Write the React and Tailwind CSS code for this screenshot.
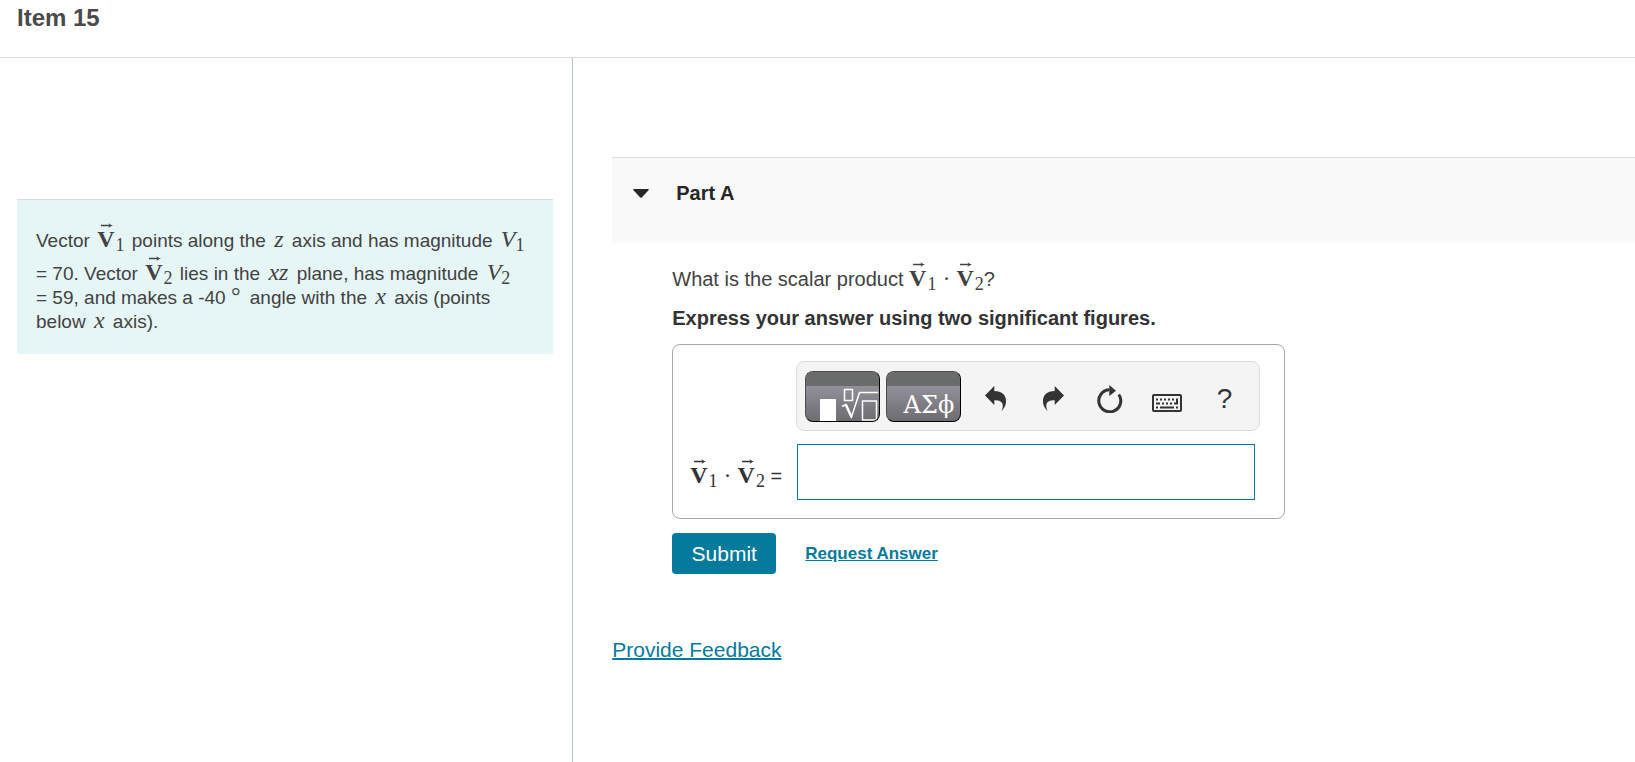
import { useState } from 'react';

// Bold vector symbol with an arrow on top and a subscript
function Vec({ sub }) {
  return (
    <span className="inline-block pt-[7px] font-['Liberation_Serif',serif] leading-6 whitespace-nowrap">
      <span className="relative inline-block text-2xl leading-6 font-bold">
        V
        <svg
          className="absolute -top-1 left-1 h-[5px] w-3"
          viewBox="0 0 12 5"
          aria-hidden="true"
        >
          <path d="M0 2.5H10" stroke="currentColor" strokeWidth="1.5" />
          <path d="M7.500 0Q9 2 12 2.5Q9 3 7.500 5L8.500 2.5Z" fill="currentColor" />
        </svg>
      </span>
      <span className="relative top-1 ml-px text-lg leading-4">{sub}</span>
    </span>
  );
}

function Var({ children, sub }) {
  return (
    <span className="mx-[3px] font-['Liberation_Serif',serif] text-2xl leading-4 whitespace-nowrap">
      <i>{children}</i>
      {sub && <span className="relative top-1 text-lg leading-4">{sub}</span>}
    </span>
  );
}

function DotProduct() {
  return (
    <span className="whitespace-nowrap">
      <Vec sub="1" />
      <span className="mx-[6px] font-['Liberation_Serif',serif] text-2xl leading-6">·</span>
      <Vec sub="2" />
    </span>
  );
}

const icons = [
  {
    label: 'Undo',
    box: '0 0 22 26',
    size: 'w-[22px] h-[26px]',
    art: <path d="M0 9.5L9.3 0V5C17 5 21.5 9 21 16.500Q20.500 21 16.500 25Q19 19.500 16.800 16.500Q14.500 13.800 9.300 14.300V19Z" fill="currentColor" />,
  },
  {
    label: 'Redo',
    box: '0 0 22 26',
    size: 'w-[22px] h-[26px]',
    art: <path d="M22 9.5L12.700 0V5C5 5 .5 9 1 16.500Q1.500 21 5.500 25Q3 19.500 5.200 16.500Q7.500 13.800 12.700 14.300V19Z" fill="currentColor" />,
  },
  {
    label: 'Reset',
    box: '0 0 26 28',
    size: 'w-[26px] h-7',
    art: (
      <>
        <path d="M12.500 4.800A11 11 0 1 0 21.800 9.500" fill="none" stroke="currentColor" strokeWidth="3" />
        <path d="M12.300 0L19 5.700L12.300 11Z" fill="currentColor" />
      </>
    ),
  },
  {
    label: 'Keyboard shortcuts',
    box: '0 0 30 18',
    size: 'mt-2 w-[30px] h-[18px]',
    art: (
      <>
        <rect x="1" y="1" width="28" height="16" rx="1" fill="none" stroke="currentColor" strokeWidth="2" />
        <path d="M4 5.500H23" stroke="currentColor" strokeWidth="2" strokeDasharray="2 2" />
        <path d="M4 9.500H8M10 9.500H12M14 9.500H16M18 9.500H20M22 9.500H26M25 4.500V10" stroke="currentColor" strokeWidth="2" />
        <path d="M4 13.500H6M8 13.500H22M24 13.500H26" stroke="currentColor" strokeWidth="2" />
      </>
    ),
  },
];

const paletteButton =
  'relative h-[51px] w-[75px] shrink-0 overflow-hidden rounded-lg border border-black border-t-[#4c4c4c] border-l-[#4c4c4c] bg-linear-to-b from-[#a29fac] to-[#6d6c70] text-white';

export default function App() {
  const [answer, setAnswer] = useState('');
  const [open, setOpen] = useState(true);

  return (
    <div className="flex min-h-screen flex-col bg-white font-['Liberation_Sans',Arial,sans-serif] text-[#333]">
      {/* Header */}
      <header className="h-[58px] border-b border-[#dcdcdc] px-[17px] pt-1">
        <h1 className="text-2xl leading-7 font-bold text-[#4a4a4a]">Item 15</h1>
      </header>

      <div className="flex grow">
        {/* Problem statement */}
        <aside className="w-[35%] shrink-0 pt-[141px] pr-[19px] pl-[17px]">
          <p className="border-t border-[#d4dedd] bg-[#e6f6f7] py-5 pr-6 pl-[19px] text-[19px] leading-6 text-[#424242]">
            Vector{' '}
            <span className="mx-[2px]">
              <Vec sub="1" />
            </span>{' '}
            points along the <Var>z</Var> axis and has magnitude <Var sub="1">V</Var> = 70. Vector{' '}
            <span className="mx-[2px]">
              <Vec sub="2" />
            </span>{' '}
            lies in the <Var>xz</Var> plane, has magnitude <Var sub="2">V</Var> = 59, and makes a
            -40{' '}
            <span className="mr-1 font-['Liberation_Serif',serif] text-2xl leading-4">°</span> angle
            with the <Var>x</Var> axis (points below <Var>x</Var> axis).
          </p>
        </aside>

        {/* Question */}
        <main className="min-w-0 grow border-l border-[#b4cbdb] pt-[99px] pl-[39px]">
          <section>
            <div className="h-[86px] border-t border-[#dcdcdc] bg-[#f9f9f9] pt-[23px] pl-[21px]">
              <h2>
                <button
                  type="button"
                  aria-expanded={open}
                  onClick={() => setOpen(!open)}
                  className="flex items-center gap-[27px] text-xl leading-6 font-bold text-[#262626]"
                >
                  <svg className="h-[9px] w-4" viewBox="0 0 16 9" aria-hidden="true">
                    <path d="M1 0H15Q16.500 .3 15.300 1.500L9 8.300Q8 9.300 7 8.300L.7 1.500Q-.5 .3 1 0Z" fill="currentColor" />
                  </svg>
                  Part A
                </button>
              </h2>
            </div>

            {open && (
              <div className="pt-4 pl-[60px]">
                <p className="text-xl leading-6 text-[#424242]">
                  What is the scalar product <DotProduct />?
                </p>
                <p className="mt-[15px] text-xl leading-6 font-bold">
                  Express your answer using two significant figures.
                </p>

                <div className="mt-[14px] grid max-w-[613px] grid-cols-[106px_1fr] gap-y-[13px] rounded-lg border border-[#a8a8a8] pt-4 pr-6 pb-[18px] pl-[17px]">
                  {/* Equation toolbar */}
                  <div className="col-start-2 flex h-[70px] items-center gap-[6px] rounded-lg border border-[#dcdcdc] bg-[#f4f4f4] pr-[6px] pl-2 text-[#333]">
                    <button type="button" aria-label="Templates" className={paletteButton}>
                      <span className="absolute inset-x-0 top-0 h-[14px] bg-[#6a6b6b]" />
                      <svg className="absolute inset-0 h-[49px] w-[73px]" viewBox="1 1 73 49" aria-hidden="true">
                        <rect x="15" y="28" width="16" height="22" fill="white" />
                        <rect x="39.500" y="18.500" width="8" height="11" fill="none" stroke="white" strokeWidth="1.500" />
                        <path d="M37 35.500L41 33.500L46.500 46L54.500 21.500H73" fill="none" stroke="white" strokeWidth="1.500" />
                        <path d="M41 34L46.500 46" stroke="white" strokeWidth="2.500" />
                        <rect x="57.500" y="30" width="14" height="19" fill="none" stroke="white" strokeWidth="1.500" />
                      </svg>
                    </button>
                    <button type="button" aria-label="Symbols" className={paletteButton}>
                      <span className="absolute inset-x-0 top-0 h-[14px] bg-[#6a6b6b]" />
                      <span className="absolute right-[6px] bottom-0 font-['DejaVu_Serif',serif] text-2xl leading-8">
                        ΑΣϕ
                      </span>
                    </button>
                    <div className="grid grow grid-cols-5 place-items-center pt-[5px]">
                      {icons.map((icon) => (
                        <button key={icon.label} type="button" aria-label={icon.label}>
                          <svg className={icon.size} viewBox={icon.box} aria-hidden="true">
                            {icon.art}
                          </svg>
                        </button>
                      ))}
                      <button type="button" aria-label="Help" className="text-[28px] leading-7">
                        ?
                      </button>
                    </div>
                  </div>

                  <label htmlFor="answer" className="self-center text-xl leading-6 whitespace-nowrap">
                    <DotProduct /> =
                  </label>
                  <div className="pr-[5px] pl-px">
                    <input
                      id="answer"
                      type="text"
                      value={answer}
                      onChange={(e) => setAnswer(e.target.value)}
                      className="block h-14 w-full border border-[#047a9c] px-3 text-xl outline-none"
                    />
                  </div>
                </div>

                <div className="mt-[14px] flex items-center gap-[29px]">
                  <button
                    type="button"
                    className="h-[41px] w-26 rounded-sm bg-[#047a9c] text-[21px] leading-6 text-white"
                  >
                    Submit
                  </button>
                  <a href="#answer" className="text-[17px] leading-5 font-bold text-[#047a9c] underline">
                    Request Answer
                  </a>
                </div>
              </div>
            )}
          </section>

          <a
            href="#feedback"
            className="mt-16 inline-block text-[21px] leading-6 text-[#047a9c] underline decoration-2"
          >
            Provide Feedback
          </a>
        </main>
      </div>
    </div>
  );
}
